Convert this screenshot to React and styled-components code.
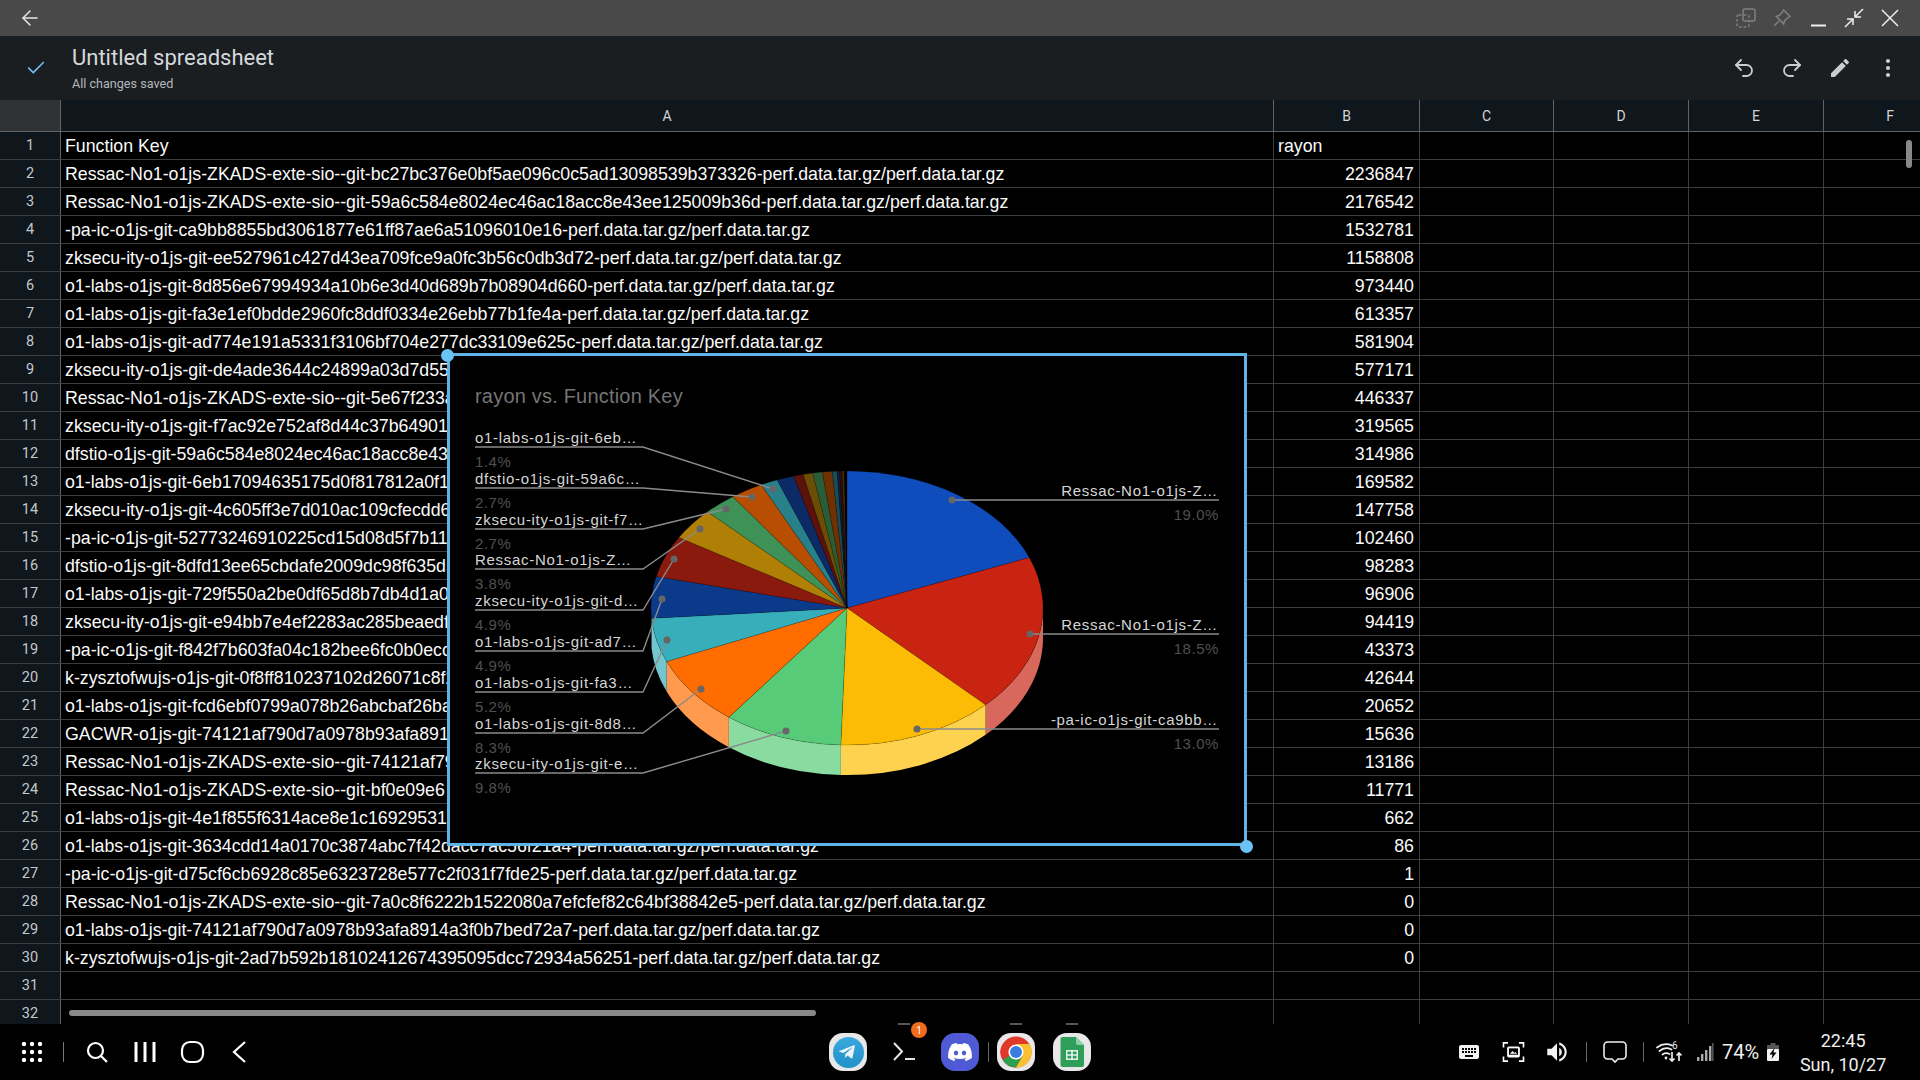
import React from 'react';
import styled, { createGlobalStyle } from 'styled-components';
import { ArrowLeft, Undo2, Redo2, Check } from 'lucide-react';
import { FaDiscord, FaTelegramPlane } from 'react-icons/fa';
import { MdEdit, MdKeyboard, MdVolumeUp } from 'react-icons/md';

const GlobalStyle = createGlobalStyle`
  html, body { margin: 0; padding: 0; background: #000; overflow: hidden; }
  * { box-sizing: border-box; }
`;

const SUFFIX = '-perf.data.tar.gz/perf.data.tar.gz';

const ROWS = [
  ['Function Key', 'rayon'],
  ['Ressac-No1-o1js-ZKADS-exte-sio--git-bc27bc376e0bf5ae096c0c5ad13098539b373326' + SUFFIX, '2236847'],
  ['Ressac-No1-o1js-ZKADS-exte-sio--git-59a6c584e8024ec46ac18acc8e43ee125009b36d' + SUFFIX, '2176542'],
  ['-pa-ic-o1js-git-ca9bb8855bd3061877e61ff87ae6a51096010e16' + SUFFIX, '1532781'],
  ['zksecu-ity-o1js-git-ee527961c427d43ea709fce9a0fc3b56c0db3d72' + SUFFIX, '1158808'],
  ['o1-labs-o1js-git-8d856e67994934a10b6e3d40d689b7b08904d660' + SUFFIX, '973440'],
  ['o1-labs-o1js-git-fa3e1ef0bdde2960fc8ddf0334e26ebb77b1fe4a' + SUFFIX, '613357'],
  ['o1-labs-o1js-git-ad774e191a5331f3106bf704e277dc33109e625c' + SUFFIX, '581904'],
  ['zksecu-ity-o1js-git-de4ade3644c24899a03d7d55', '577171'],
  ['Ressac-No1-o1js-ZKADS-exte-sio--git-5e67f233a', '446337'],
  ['zksecu-ity-o1js-git-f7ac92e752af8d44c37b64901', '319565'],
  ['dfstio-o1js-git-59a6c584e8024ec46ac18acc8e43', '314986'],
  ['o1-labs-o1js-git-6eb17094635175d0f817812a0f1', '169582'],
  ['zksecu-ity-o1js-git-4c605ff3e7d010ac109cfecdd6', '147758'],
  ['-pa-ic-o1js-git-52773246910225cd15d08d5f7b11', '102460'],
  ['dfstio-o1js-git-8dfd13ee65cbdafe2009dc98f635d5', '98283'],
  ['o1-labs-o1js-git-729f550a2be0df65d8b7db4d1a0', '96906'],
  ['zksecu-ity-o1js-git-e94bb7e4ef2283ac285beaedf', '94419'],
  ['-pa-ic-o1js-git-f842f7b603fa04c182bee6fc0b0ecc', '43373'],
  ['k-zysztofwujs-o1js-git-0f8ff810237102d26071c8f2', '42644'],
  ['o1-labs-o1js-git-fcd6ebf0799a078b26abcbaf26ba', '20652'],
  ['GACWR-o1js-git-74121af790d7a0978b93afa891', '15636'],
  ['Ressac-No1-o1js-ZKADS-exte-sio--git-74121af79', '13186'],
  ['Ressac-No1-o1js-ZKADS-exte-sio--git-bf0e09e6', '11771'],
  ['o1-labs-o1js-git-4e1f855f6314ace8e1c16929531', '662'],
  ['o1-labs-o1js-git-3634cdd14a0170c3874abc7f42dacc7ac56f21a4' + SUFFIX, '86'],
  ['-pa-ic-o1js-git-d75cf6cb6928c85e6323728e577c2f031f7fde25' + SUFFIX, '1'],
  ['Ressac-No1-o1js-ZKADS-exte-sio--git-7a0c8f6222b1522080a7efcfef82c64bf38842e5' + SUFFIX, '0'],
  ['o1-labs-o1js-git-74121af790d7a0978b93afa8914a3f0b7bed72a7' + SUFFIX, '0'],
  ['k-zysztofwujs-o1js-git-2ad7b592b18102412674395095dcc72934a56251' + SUFFIX, '0'],
  ['', ''],
  ['', ''],
];

const COLUMNS = ['A', 'B', 'C', 'D', 'E', 'F'];
const GRID = '61px 1213px 146px 134px 135px 135px 132px';

// pie slices clockwise from 12 o'clock: [percent, top colour, wall colour]
const SLICES = [
  [19.0, '#0f4dbd', null],
  [18.5, '#c92312', '#d8675c'],
  [13.0, '#fcbc05', '#fdd24f'],
  [9.8, '#57cb78', '#89dba0'],
  [8.3, '#ff6d01', '#ff9a4f'],
  [5.2, '#37aeba', '#73c6ce'],
  [4.9, '#0c3a8a', null],
  [4.9, '#8a1a0e', null],
  [3.8, '#b07f05', null],
  [2.7, '#3f9257', null],
  [2.7, '#b84e02', null],
  [1.4, '#27808a', null],
  [1.4, '#0b2a66', null],
  [0.8, '#5c120a', null],
  [0.8, '#6b4e04', null],
  [0.8, '#2b5c38', null],
  [0.8, '#6f3102', null],
  [0.4, '#1a4d52', null],
  [0.2, '#08204a', null],
  [0.2, '#3a0b06', null],
  [0.2, '#3b2b02', null],
  [0.2, '#000000', null],
];

const LEFT_LABELS = [
  ['o1-labs-o1js-git-6eb…', '1.4%', 447, 773, 489],
  ['dfstio-o1js-git-59a6c…', '2.7%', 488, 752, 497],
  ['zksecu-ity-o1js-git-f7…', '2.7%', 529, 726, 509],
  ['Ressac-No1-o1js-Z…', '3.8%', 569, 700, 529],
  ['zksecu-ity-o1js-git-d…', '4.9%', 610, 674, 559],
  ['o1-labs-o1js-git-ad7…', '4.9%', 651, 662, 599],
  ['o1-labs-o1js-git-fa3…', '5.2%', 692, 667, 640],
  ['o1-labs-o1js-git-8d8…', '8.3%', 733, 701, 689],
  ['zksecu-ity-o1js-git-e…', '9.8%', 773, 786, 731],
];

const RIGHT_LABELS = [
  ['Ressac-No1-o1js-Z…', '19.0%', 500, 952],
  ['Ressac-No1-o1js-Z…', '18.5%', 634, 1030],
  ['-pa-ic-o1js-git-ca9bb…', '13.0%', 729, 917],
];

const Screen = styled.div`
  position: relative;
  width: 1920px;
  height: 1080px;
  display: flex;
  flex-direction: column;
  background: #000;
  font-family: 'Liberation Sans', Arial, sans-serif;
  overflow: hidden;
`;

const WindowBar = styled.div`
  height: 36px;
  flex: none;
  display: flex;
  align-items: center;
  justify-content: space-between;
  padding: 0 19px 0 18px;
  background: #494949;
  color: #e6e6e6;
`;

const WindowActions = styled.div`
  display: flex;
  align-items: center;
  gap: 14px;
`;

const WindowIcon = styled.svg`
  width: 22px;
  height: 22px;
  display: block;
  fill: none;
  stroke: ${(p) => p.$color || '#eeeeee'};
  stroke-width: 1.5;
`;

const AppBar = styled.div`
  height: 64px;
  flex: none;
  display: flex;
  align-items: center;
  background: #1a1e21;
  padding: 0 22px 0 25px;
`;

const SavedMark = styled.div`
  width: 47px;
  display: flex;
  color: #6ec1ef;
`;

const TitleBlock = styled.div`
  flex: 1;
  display: flex;
  flex-direction: column;
  gap: 6px;
`;

const DocTitle = styled.div`
  font-family: Roboto, sans-serif;
  font-size: 22px;
  line-height: 26px;
  color: #d5d9dc;
`;

const DocStatus = styled.div`
  font-family: Roboto, sans-serif;
  font-size: 12.6px;
  line-height: 14px;
  color: #b4b8bb;
`;

const AppActions = styled.div`
  display: flex;
  align-items: center;
  gap: 24px;
  color: #c9cdd0;
`;

const Sheet = styled.div`
  position: relative;
  flex: 1;
  min-height: 0;
  overflow: hidden;
`;

const GridRow = styled.div`
  display: grid;
  grid-template-columns: ${GRID};
  height: ${(p) => (p.$head ? 32 : 28)}px;
  border-bottom: 1px solid ${(p) => (p.$head ? '#5f6368' : '#3c3e40')};
`;

const Corner = styled.div`
  background: #303336;
  border-right: 1px solid #5f6368;
`;

const ColumnHead = styled.div`
  display: flex;
  align-items: center;
  justify-content: center;
  background: #0f161c;
  border-right: 1px solid #5f6368;
  color: #d2d5d8;
  font-family: Roboto, sans-serif;
  font-size: 14px;
  &:last-child { border-right: 0; }
`;

const RowHead = styled.div`
  display: flex;
  align-items: center;
  justify-content: center;
  padding-bottom: 1px;
  background: #0f161c;
  border-right: 1px solid #5f6368;
  color: #c4c8cb;
  font-family: Roboto, sans-serif;
  font-size: 14.5px;
`;

const Cell = styled.div`
  display: flex;
  align-items: center;
  justify-content: ${(p) => (p.$num ? 'flex-end' : 'flex-start')};
  padding: 1px 5px 0 4px;
  border-right: 1px solid #3c3e40;
  color: #fafafa;
  font-size: 17.75px;
  white-space: nowrap;
  &:last-child { border-right: 0; }
`;

const VScroll = styled.div`
  position: absolute;
  left: 1906px;
  top: 40px;
  width: 6px;
  height: 28px;
  border-radius: 3px;
  background: #888;
`;

const HScroll = styled.div`
  position: absolute;
  left: 69px;
  bottom: 8px;
  width: 747px;
  height: 6px;
  border-radius: 3px;
  background: #888;
`;

const ChartFrame = styled.div`
  position: absolute;
  left: 447px;
  top: 253px;
  width: 800px;
  height: 493px;
  background: #000;
  border: 3px solid #5fb4e5;
`;

const Handle = styled.div`
  position: absolute;
  width: 13px;
  height: 13px;
  border-radius: 50%;
  background: #6ac3f6;
  left: ${(p) => p.$x}px;
  top: ${(p) => p.$y}px;
`;

const ChartSvg = styled.svg`
  display: block;
  width: 794px;
  height: 487px;
  font-family: 'Liberation Sans', Arial, sans-serif;
`;

const ChartTitle = styled.text`
  font-size: 20px;
  letter-spacing: 0.2px;
  fill: #757575;
`;

const LabelName = styled.text`
  font-size: 15px;
  letter-spacing: 0.7px;
  fill: #d6d6d6;
  text-anchor: ${(p) => p.$anchor || 'start'};
`;

const LabelValue = styled.text`
  font-size: 15px;
  letter-spacing: 0.55px;
  fill: #505050;
  text-anchor: ${(p) => p.$anchor || 'start'};
`;

const Leader = styled.polyline`
  fill: none;
  stroke: #8b8b8b;
  stroke-width: 1.4;
`;

const LeaderDot = styled.circle`
  fill: #666;
`;

const Taskbar = styled.div`
  height: 56px;
  flex: none;
  display: grid;
  grid-template-columns: 829px 262px 1fr;
  align-items: center;
  background: #000;
  color: #f2f2f2;
`;

const NavGroup = styled.div`
  display: flex;
  align-items: center;
  padding-left: 21px;
`;

const NavSlot = styled.div`
  width: 48px;
  display: flex;
  justify-content: flex-start;
`;

const NavDivider = styled.div`
  width: 1px;
  height: 20px;
  margin: 0 20px 0 20px;
  background: #777;
`;

const Dock = styled.div`
  display: flex;
  align-items: center;
  gap: 18px;
`;

const DockApp = styled.div`
  position: relative;
  width: 38px;
  height: 38px;
  flex: none;
  display: flex;
  align-items: center;
  justify-content: center;
  border-radius: 14px;
  background: ${(p) => p.$bg || '#e8e8e8'};
  color: #fff;
  &::before {
    content: ${(p) => (p.$running ? "''" : 'none')};
    position: absolute;
    left: 13px;
    top: -10px;
    width: 12px;
    height: 2px;
    background: #555;
  }
`;

const Badge = styled.span`
  position: absolute;
  right: -4px;
  top: -11px;
  width: 16px;
  height: 16px;
  display: flex;
  align-items: center;
  justify-content: center;
  border-radius: 50%;
  background: #f26c1d;
  color: #fff;
  font-family: Roboto, sans-serif;
  font-size: 10px;
`;

const DockDivider = styled.div`
  width: 1px;
  height: 20px;
  flex: none;
  margin: 0 -10px 0 -9px;
  background: #666;
`;

const Telegram = styled.div`
  width: 31px;
  height: 31px;
  border-radius: 50%;
  display: flex;
  align-items: center;
  justify-content: center;
  padding-right: 2px;
  background: linear-gradient(#3aa9dd, #2290c9);
  color: #e9f5fb;
`;

const Tray = styled.div`
  display: flex;
  align-items: center;
  padding-left: 356px;
`;

const TraySlot = styled.div`
  display: flex;
  justify-content: center;
  width: ${(p) => p.$w}px;
`;

const TrayDivider = styled.div`
  width: 1px;
  height: 20px;
  margin-left: ${(p) => p.$gap || 0}px;
  background: #666;
`;

const BatteryText = styled.div`
  font-family: Roboto, sans-serif;
  font-size: 20px;
  color: #eee;
  margin: 0 7px 0 8px;
`;

const Clock = styled.div`
  width: 110px;
  margin-left: 8px;
  padding-top: 2px;
  display: flex;
  flex-direction: column;
  align-items: center;
  gap: 4px;
  font-family: Roboto, sans-serif;
  font-size: 18px;
  line-height: 20px;
  color: #eee;
`;

const DuplicateIcon = () => (
  <WindowIcon viewBox="0 0 22 22" $color="#808080">
    <rect x="8" y="2" width="12" height="12" rx="2" />
    <rect x="2" y="8" width="12" height="12" rx="2" strokeDasharray="2.5 2" />
  </WindowIcon>
);

const PinIcon = () => (
  <WindowIcon viewBox="0 0 22 22" $color="#808080">
    <path d="M12.5 3 19 9.5l-2 1-3.5 3.5-.8 3L5.200 9.300l3-.8L11.500 5z" />
    <path d="M8 14 3 19" />
  </WindowIcon>
);

const MinimizeIcon = () => (
  <WindowIcon viewBox="0 0 22 22">
    <path d="M4 18.500h15" strokeWidth="2" />
  </WindowIcon>
);

const RestoreIcon = () => (
  <WindowIcon viewBox="0 0 22 22">
    <path d="M20 2 12 10M12 4v6h6M2 20l8-8M4 12h6v6" />
  </WindowIcon>
);

const KebabIcon = () => (
  <svg width="22" height="22" viewBox="0 0 22 22" fill="currentColor">
    <circle cx="12" cy="4" r="2.100" />
    <circle cx="12" cy="11" r="2.100" />
    <circle cx="12" cy="18" r="2.100" />
  </svg>
);

const AppsIcon = () => (
  <svg width="22" height="20" viewBox="0 0 22 20" fill="#fff">
    {[3, 11, 19].map((x) =>
      [2, 10, 18].map((y) => <circle key={`${x}-${y}`} cx={x} cy={y} r="2.200" />)
    )}
  </svg>
);

const NavIcon = ({ children }) => (
  <svg width="26" height="26" viewBox="0 0 26 26" fill="none" stroke="#fff" strokeWidth="2.200">
    {children}
  </svg>
);

const TerminalGlyph = () => (
  <svg width="26" height="26" viewBox="0 0 26 26" fill="none" stroke="#e4e4e4" strokeWidth="2">
    <path d="M3 4l8 8.500-8 8.500M14 20h10" />
  </svg>
);

const ChromeGlyph = () => (
  <svg width="32" height="32" viewBox="0 0 32 32">
    <circle cx="16" cy="16" r="15.500" fill="#e0392b" />
    <path d="M16 16 2.600 23.800A15.500 15.500 0 0 1 2.600 8.200L9 9z" fill="#e0392b" />
    <path d="M16 16 2.600 23.700A15.500 15.500 0 0 0 16 31.500l7-12z" fill="#2f9e4f" />
    <path d="M16 8h13.400A15.500 15.500 0 0 1 16 31.500l7-12z" fill="#fbc02d" />
    <circle cx="16" cy="16" r="7.600" fill="#fff" />
    <circle cx="16" cy="16" r="6" fill="#3a7de0" />
  </svg>
);

const SheetsGlyph = () => (
  <svg width="24" height="30" viewBox="0 0 24 30">
    <path d="M2.500 0H16l8 8v20a2 2 0 0 1-2 2H2.500a2 2 0 0 1-2-2V2a2 2 0 0 1 2-2z" fill="#2f9e5a" />
    <path d="M16 0l8 8h-6a2 2 0 0 1-2-2z" fill="#8fd0a8" />
    <path d="M6 13h12v10H6zM7.500 14.500v2.800h3.700v-2.800zm5.300 0v2.800h3.700v-2.800zM7.500 18.800v2.700h3.700v-2.700zm5.300 0v2.700h3.700v-2.700z" fill="#e6f4ea" fillRule="evenodd" />
  </svg>
);

const CaptureIcon = () => (
  <svg width="23" height="20" viewBox="0 0 24 22" fill="none" stroke="#fff" strokeWidth="1.800">
    <path d="M1 6V1h5M18 1h5v5M23 16v5h-5M6 21H1v-5" />
    <rect x="5" y="5" width="14" height="12" rx="2" fill="#fff" stroke="none" />
    <rect x="7" y="7" width="10" height="7" fill="#000" stroke="none" />
    <path d="M8 13l3-3 2 2 1-1 2 2z" fill="#fff" stroke="none" />
  </svg>
);

const BubbleIcon = () => (
  <svg width="24" height="24" viewBox="0 0 24 24" fill="none" stroke="#eee" strokeWidth="1.600">
    <path d="M4.500 2h15A3.500 3.500 0 0 1 23 5.500v10a3.500 3.500 0 0 1-3.500 3.500H15l-3 3-3-3H4.500A3.500 3.500 0 0 1 1 15.500v-10A3.500 3.500 0 0 1 4.500 2z" />
  </svg>
);

const WifiIcon = () => (
  <svg width="28" height="24" viewBox="0 0 28 24" fill="none" stroke="#eee" strokeWidth="1.700">
    <path d="M1 7.500a15 15 0 0 1 15-2M3.500 11a11 11 0 0 1 12-1.500M6.500 14.500a7 7 0 0 1 7-.5" strokeLinecap="round" />
    <circle cx="10" cy="18" r="1.400" fill="#eee" stroke="none" />
    <path d="M16 12v9M13.500 18.500 16 21l2.500-2.500M23 21v-8M20.500 15.500 23 13l2.500 2.500" />
    <text x="16" y="9" fontSize="10" fontFamily="Roboto, sans-serif" fill="#eee" stroke="none">6</text>
  </svg>
);

const SignalIcon = () => (
  <svg width="18" height="20" viewBox="0 0 18 20" fill="#aaa">
    <rect x="1" y="15" width="2.400" height="4" />
    <rect x="5" y="12" width="2.400" height="7" />
    <rect x="9" y="8" width="2.400" height="11" />
    <rect x="13" y="4" width="2.400" height="15" />
    <rect x="16" y="1" width="1.600" height="18" fill="#555" />
  </svg>
);

const BatteryIcon = () => (
  <svg width="14" height="20" viewBox="0 0 14 20">
    <path d="M4.500 1h5v2h-5z" fill="#555" />
    <rect x="1" y="3" width="12" height="4" fill="#555" />
    <rect x="1" y="7" width="12" height="12" rx="1" fill="#f2f2f2" />
    <path d="M8.500 6 3.500 12.500h3L5.500 17l5-6.500h-3z" fill="#000" />
  </svg>
);

const CX = 847;
const CY = 608;
const RX = 196;
const RY = 137;
const DEPTH = 30;

function ellipsePoint(deg, dy = 0) {
  const r = (deg * Math.PI) / 180;
  return [CX + RX * Math.sin(r), CY - RY * Math.cos(r) + dy];
}

function PieChart() {
  let acc = 0;
  const parts = SLICES.map(([pct, color, wall]) => {
    const a0 = (acc / 100) * 360;
    acc += pct;
    const a1 = (acc / 100) * 360;
    return { a0, a1, color, wall };
  });
  return (
    <g>
      {parts.filter((s) => s.wall).map((s) => {
        const from = Math.max(s.a0, 90);
        const to = Math.min(s.a1, 270);
        const [x0, y0] = ellipsePoint(from);
        const [x1, y1] = ellipsePoint(to);
        return (
          <path
            key={s.color}
            fill={s.wall}
            d={`M${x0} ${y0}A${RX} ${RY} 0 0 1 ${x1} ${y1}L${x1} ${y1 + DEPTH}A${RX} ${RY} 0 0 0 ${x0} ${y0 + DEPTH}Z`}
          />
        );
      })}
      {parts.map((s) => {
        const [x0, y0] = ellipsePoint(s.a0);
        const [x1, y1] = ellipsePoint(s.a1);
        return (
          <path
            key={s.color}
            fill={s.color}
            stroke="#000"
            strokeOpacity="0.25"
            strokeWidth="0.6"
            d={`M${CX} ${CY}L${x0} ${y0}A${RX} ${RY} 0 0 1 ${x1} ${y1}Z`}
          />
        );
      })}
    </g>
  );
}

function Chart() {
  return (
    <ChartFrame>
      <ChartSvg viewBox="450 356 794 487">
        <ChartTitle x="475" y="403">rayon vs. Function Key</ChartTitle>
        <PieChart />
        {LEFT_LABELS.map(([name, pct, y, dx, dy]) => (
          <g key={name + y}>
            <LabelName x="475" y={y - 4}>{name}</LabelName>
            <LabelValue x="475" y={y + 20}>{pct}</LabelValue>
            <Leader points={`475,${y} 643,${y} ${dx},${dy}`} />
            <LeaderDot cx={dx} cy={dy} r="3.500" />
          </g>
        ))}
        {RIGHT_LABELS.map(([name, pct, y, dx]) => (
          <g key={name + y}>
            <LabelName x="1218" y={y - 4} $anchor="end">{name}</LabelName>
            <LabelValue x="1219" y={y + 20} $anchor="end">{pct}</LabelValue>
            <Leader points={`1219,${y} ${dx},${y}`} />
            <LeaderDot cx={dx} cy={y} r="3.500" />
          </g>
        ))}
      </ChartSvg>
      <Handle $x={-9} $y={-7} />
      <Handle $x={790} $y={484} />
    </ChartFrame>
  );
}

export default function App() {
  return (
    <Screen>
      <GlobalStyle />
      <WindowBar>
        <ArrowLeft size={24} strokeWidth={1.5} />
        <WindowActions>
          <DuplicateIcon />
          <PinIcon />
          <MinimizeIcon />
          <RestoreIcon />
          <WindowIcon viewBox="0 0 22 22">
            <path d="M3 3l16 16M19 3 3 19" />
          </WindowIcon>
        </WindowActions>
      </WindowBar>

      <AppBar>
        <SavedMark><Check size={22} strokeWidth={1.8} /></SavedMark>
        <TitleBlock>
          <DocTitle>Untitled spreadsheet</DocTitle>
          <DocStatus>All changes saved</DocStatus>
        </TitleBlock>
        <AppActions>
          <Undo2 size={24} strokeWidth={1.8} />
          <Redo2 size={24} strokeWidth={1.8} />
          <MdEdit size={24} />
          <KebabIcon />
        </AppActions>
      </AppBar>

      <Sheet>
        <GridRow $head>
          <Corner />
          {COLUMNS.map((c) => <ColumnHead key={c}>{c}</ColumnHead>)}
        </GridRow>
        {ROWS.map(([fn, value], i) => (
          <GridRow key={i}>
            <RowHead>{i + 1}</RowHead>
            <Cell>{fn}</Cell>
            <Cell $num={i > 0}>{value}</Cell>
            <Cell />
            <Cell />
            <Cell />
            <Cell />
          </GridRow>
        ))}
        <Chart />
        <VScroll />
        <HScroll />
      </Sheet>

      <Taskbar>
        <NavGroup>
          <AppsIcon />
          <NavDivider />
          <NavSlot>
            <NavIcon>
              <circle cx="11.500" cy="11.500" r="7.500" />
              <path d="M17 17l6 6" />
            </NavIcon>
          </NavSlot>
          <NavSlot>
            <NavIcon>
              <path d="M4 3v20M13 3v20M22 3v20" strokeWidth="3" />
            </NavIcon>
          </NavSlot>
          <NavSlot>
            <NavIcon>
              <rect x="2" y="3" width="21" height="20" rx="8" />
            </NavIcon>
          </NavSlot>
          <NavSlot>
            <NavIcon>
              <path d="M17 3 6 13l11 10" />
            </NavIcon>
          </NavSlot>
        </NavGroup>

        <Dock>
          <DockApp>
            <Telegram><FaTelegramPlane size={18} /></Telegram>
          </DockApp>
          <DockApp $bg="#000" $running>
            <TerminalGlyph />
            <Badge>1</Badge>
          </DockApp>
          <DockApp $bg="#4f5bd5"><FaDiscord size={26} /></DockApp>
          <DockDivider />
          <DockApp $running><ChromeGlyph /></DockApp>
          <DockApp $running><SheetsGlyph /></DockApp>
        </Dock>

        <Tray>
          <TraySlot $w={44}><MdKeyboard size={24} /></TraySlot>
          <TraySlot $w={44}><CaptureIcon /></TraySlot>
          <TraySlot $w={44}><MdVolumeUp size={26} /></TraySlot>
          <TrayDivider $gap={7} />
          <TraySlot $w={56}><BubbleIcon /></TraySlot>
          <TrayDivider />
          <TraySlot $w={52}><WifiIcon /></TraySlot>
          <TraySlot $w={18}><SignalIcon /></TraySlot>
          <BatteryText>74%</BatteryText>
          <BatteryIcon />
          <Clock>
            <span>22:45</span>
            <span>Sun, 10/27</span>
          </Clock>
        </Tray>
      </Taskbar>
    </Screen>
  );
}
